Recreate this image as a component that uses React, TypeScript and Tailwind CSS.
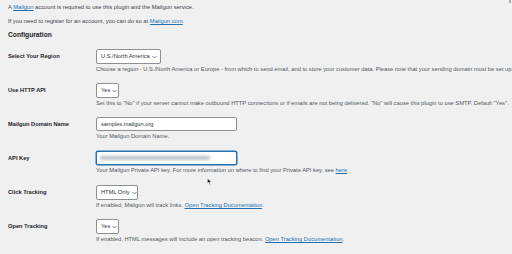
import React from 'react';

const link = 'text-[#2271b1] underline';

const Select = ({ value, w }: { value: string; w: string }) => (
    <div className={`${w} h-[15px] shrink-0 whitespace-nowrap flex items-center justify-between pl-[4px] pr-[3px] bg-white border border-[#8c8f94] rounded-[2px] text-[5.7px] text-[#2c3338]`}>
        <span>{value}</span>
        <svg width="5" height="4" viewBox="0 0 10 8" className="ml-[2px] shrink-0">
            <path d="M1 2 L5 6 L9 2" stroke="#50575e" strokeWidth="1.4" fill="none" />
        </svg>
    </div>
);

const Row = ({ label, children, desc }: { label: string; children: React.ReactNode; desc: React.ReactNode }) => (
    <div className="flex h-[34px]">
        <div className="w-[88px] shrink-0 h-[15px] whitespace-nowrap flex items-center font-semibold text-[5.7px] text-[#1d2327]">{label}</div>
        <div className="min-w-0 flex-1">
            {children}
            <p className="mt-[1px] leading-[8px] text-[5.75px] text-[#50575e] whitespace-nowrap">{desc}</p>
        </div>
    </div>
);

const App = () => {
    return (
        <div className="relative w-[512px] h-[254px] overflow-hidden bg-[#f0f0f1] px-[8px] pt-[3px] text-[#3c434a]" style={{ fontFamily: '"Liberation Sans", Arial, sans-serif' }}>
            <p className="leading-[8px] text-[5.8px] whitespace-nowrap">A <span className={link}>Mailgun</span> account is required to use this plugin and the Mailgun service.</p>
            <p className="mt-[6px] leading-[8px] text-[5.8px] whitespace-nowrap">If you need to register for an account, you can do so at <span className={link}>Mailgun.com</span>.</p>
            <h2 className="mt-[5px] leading-[10px] text-[6.7px] font-semibold text-[#1d2327]">Configuration</h2>

            <div className="mt-[9px]">
                <Row label="Select Your Region" desc="Choose a region - U.S./North America or Europe - from which to send email, and to store your customer data. Please note that your sending domain must be set up in whichever region you choose.">
                    <Select value="U.S./North America" w="w-[65px]" />
                </Row>
                <Row label="Use HTTP API" desc={'Set this to "No" if your server cannot make outbound HTTP connections or if emails are not being delivered. "No" will cause this plugin to use SMTP. Default "Yes".'}>
                    <Select value="Yes" w="w-[23px]" />
                </Row>
                <Row label="Mailgun Domain Name" desc="Your Mailgun Domain Name.">
                    <div className="w-[141px] h-[14px] whitespace-nowrap flex items-center px-[4px] bg-white border border-[#8c8f94] rounded-[2px] text-[5.7px] text-[#2c3338]">samples.mailgun.org</div>
                </Row>
                <Row label="API Key" desc={<>Your Mailgun Private API key. For more information on where to find your Private API key, see <span className={link}>here</span></>}>
                    <div className="w-[141px] h-[14px] flex items-center px-[3px] bg-white border border-[#2271b1] rounded-[2px] shadow-[0_0_0_0.5px_#2271b1]">
                        <div className="w-[110px] h-[4px] rounded-full bg-[#b9bfc7] blur-[1.5px]" />
                    </div>
                </Row>
                <Row label="Click Tracking" desc={<>If enabled, Mailgun will track links. <span className={link}>Open Tracking Documentation</span>.</>}>
                    <Select value="HTML Only" w="w-[42px]" />
                </Row>
                <Row label="Open Tracking" desc={<>If enabled, HTML messages will include an open tracking beacon. <span className={link}>Open Tracking Documentation</span>.</>}>
                    <Select value="Yes" w="w-[23px]" />
                </Row>
            </div>

            <div className="absolute top-0 right-[1px] w-[2px] h-[3px] bg-[#b0b0b0]" />
            <svg className="absolute left-[207px] top-[178px]" width="5" height="7" viewBox="0 0 10 14">
                <path d="M1 1 L1 11 L3.5 8.5 L5.5 13 L7 12.3 L5 8 L8.5 8 Z" fill="#111" stroke="#fff" strokeWidth="0.8" />
            </svg>
        </div>
    );
};

export default App;
